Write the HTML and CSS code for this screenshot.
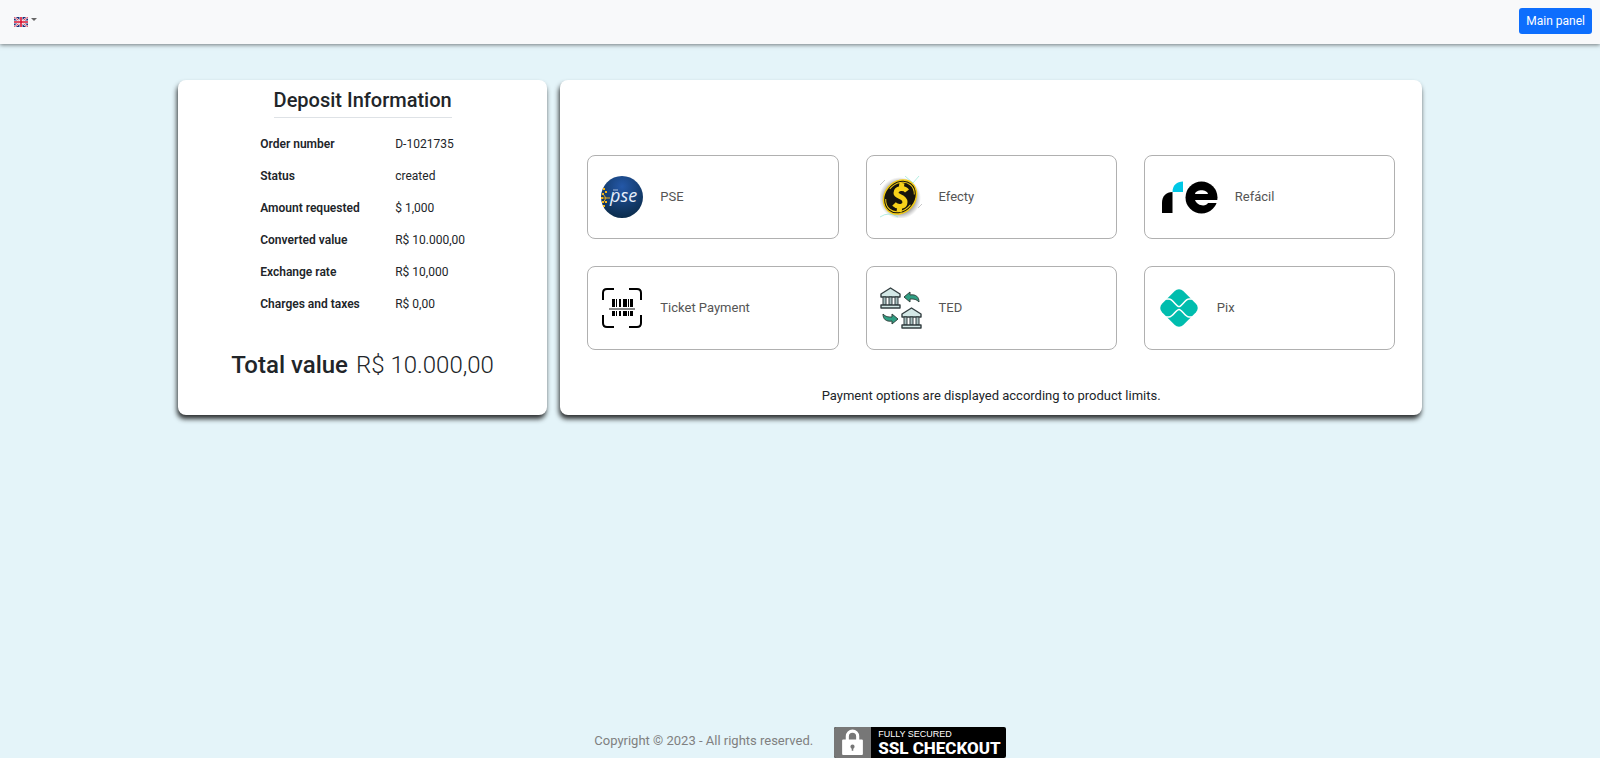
FILE: index.html
```html
<!DOCTYPE html>
<html lang="en">

<head>
    <meta charset="UTF-8">
    <meta name="viewport" content="width=device-width, initial-scale=1.0">
    <title>Deposit</title>
    <link rel="stylesheet" href="styles.css">
</head>

<body>

    <nav class="navbar">
        <button type="button" class="lang-toggle" aria-label="Language">
            <svg class="flag" viewBox="0 0 14 10">
                <rect width="14" height="10" fill="#1b2f78"/>
                <path d="M0 0L14 10M14 0L0 10" stroke="#fff" stroke-width="2"/>
                <path d="M0 0L14 10M14 0L0 10" stroke="#d8203c" stroke-width="0.8"/>
                <path d="M7 0V10M0 5H14" stroke="#fff" stroke-width="3"/>
                <path d="M7 0V10M0 5H14" stroke="#d8102f" stroke-width="1.6"/>
            </svg>
            <span class="caret"></span>
        </button>
        <a href="#" class="btn-main">Main panel</a>
    </nav>

    <main class="checkout">
        <section class="card deposit">
            <h1>Deposit Information</h1>
            <table class="details">
                <tr><th scope="row">Order number</th><td>D-1021735</td></tr>
                <tr><th scope="row">Status</th><td>created</td></tr>
                <tr><th scope="row">Amount requested</th><td>$ 1,000</td></tr>
                <tr><th scope="row">Converted value</th><td>R$ 10.000,00</td></tr>
                <tr><th scope="row">Exchange rate</th><td>R$ 10,000</td></tr>
                <tr><th scope="row">Charges and taxes</th><td>R$ 0,00</td></tr>
            </table>
            <p class="total"><strong>Total value</strong> <span>R$ 10.000,00</span></p>
        </section>

        <section class="card payment">
            <div class="options">
                <button type="button" class="option">
                    <svg class="icon" viewBox="0 0 42 42">
                        <defs>
                            <radialGradient id="pseBlue" cx="50%" cy="25%" r="75%">
                                <stop offset="0" stop-color="#2458a8"/>
                                <stop offset="1" stop-color="#0b2c4c"/>
                            </radialGradient>
                        </defs>
                        <circle cx="21" cy="21" r="21" fill="url(#pseBlue)"/>
                        <path d="M9 22H5L2 18M5 22L2 27M1 22H5" fill="none" stroke="#e2ab22"/>
                        <g fill="#f4b61c">
                            <rect x="2" y="12" width="2" height="2"/>
                            <rect x="4" y="15" width="2" height="2"/>
                            <rect x="1" y="17" width="2" height="2"/>
                            <rect x="0" y="21" width="2" height="2"/>
                            <rect x="1" y="25" width="2" height="2"/>
                            <rect x="4" y="25" width="2" height="2"/>
                            <rect x="2" y="29" width="2" height="2"/>
                        </g>
                        <text x="9" y="26" class="pse-text">pse</text>
                        <path d="M12 14H17" stroke="#a9bddb"/>
                    </svg>
                    <span>PSE</span>
                </button>

                <button type="button" class="option">
                    <svg class="icon" viewBox="0 0 42 42">
                        <defs>
                            <radialGradient id="coinGlow">
                                <stop offset="0.7" stop-color="#777" stop-opacity="0.75"/>
                                <stop offset="1" stop-color="#999" stop-opacity="0"/>
                            </radialGradient>
                        </defs>
                        <circle cx="20" cy="22" r="21" fill="url(#coinGlow)"/>
                        <path d="M25 0L33 7L39 0M0 41Q9 35 18 41" fill="none" stroke="#7fe3cf" stroke-width="0.6"/>
                        <path d="M0 9L5 4M38 32L42 28" stroke="#bbb" stroke-width="0.8"/>
                        <g transform="rotate(40 20 21)">
                            <ellipse cx="20" cy="21" rx="16" ry="19" fill="#f2cb16"/>
                            <ellipse cx="20" cy="21" rx="14.5" ry="17.5" fill="#16140d"/>
                            <ellipse cx="20" cy="21" rx="13" ry="16" fill="none" stroke="#f2cb16" stroke-dasharray="34 11"/>
                        </g>
                        <g fill="none" stroke="#f7d11a" stroke-width="5">
                            <path d="M27 15C24 11 16 12 16 17C16 21 25 20 25 26C25 31 18 32 14 28"/>
                            <path d="M22 7L21 13M20 30L19 36"/>
                        </g>
                    </svg>
                    <span>Efecty</span>
                </button>

                <button type="button" class="option">
                    <svg class="icon icon-wide" viewBox="0 0 60 42">
                        <path d="M4 37V27C4 20 8 16 14.5 16V37Z" fill="#000"/>
                        <path d="M14.5 16C14.5 9 19 5.5 25 5.5V16Z" fill="#00c8e6"/>
                        <circle cx="43.5" cy="21.5" r="16" fill="#000"/>
                        <path d="M37 18C38 13 49 13 50 18ZM37 24H60V27H50C48 31 39 30 37 24Z" fill="#fff"/>
                    </svg>
                    <span>Refácil</span>
                </button>

                <button type="button" class="option">
                    <svg class="icon" viewBox="0 0 42 42">
                        <path d="M2 13V6Q2 2 6 2H13M28 2H36Q40 2 40 6V13M40 28V36Q40 40 36 40H28M13 40H6Q2 40 2 36V28" fill="none" stroke="#000" stroke-width="2"/>
                        <path d="M11 12h3v17h-3zM15 12h1v17h-1zM18 12h2v17h-2zM22 12h4v17h-4zM27 12h1v17h-1zM29 12h3v17h-3z" fill="#000"/>
                        <path d="M8 20H34V24H8Z" fill="#fff"/>
                        <path d="M8 22H34" stroke="#888" stroke-width="2"/>
                    </svg>
                    <span>Ticket Payment</span>
                </button>

                <button type="button" class="option">
                    <svg class="icon" viewBox="0 0 42 42">
                        <defs>
                            <g id="bank" stroke="#333e40" stroke-linejoin="round">
                                <path d="M1 7L10.5 1L20 7V10H1Z" fill="#d3e8e6" stroke-width="1.4"/>
                                <path d="M3 10H6V18H3ZM9 10H12V18H9ZM15 10H18V18H15Z" fill="#a8bfbf"/>
                                <path d="M1 18H20V21H1Z" fill="#d3e8e6" stroke-width="1.4"/>
                            </g>
                        </defs>
                        <use href="#bank"/>
                        <use href="#bank" x="21" y="20"/>
                        <path id="swap" d="M24 10L30 5V8C36 7 39 10 39 15C36 12 34 12 30 12V15Z" fill="#2f9f83" stroke="#33433f" stroke-linejoin="round"/>
                        <use href="#swap" transform="rotate(180 21 21)"/>
                    </svg>
                    <span>TED</span>
                </button>

                <button type="button" class="option">
                    <svg class="icon" viewBox="0 0 42 42">
                        <rect x="6" y="6" width="30" height="30" rx="6" fill="#00bdae" transform="rotate(45 21 21)"/>
                        <path d="M6 12H11C15 12 18 19.5 21 19.5S27 12 31 12H36M6 30H11C15 30 18 22.5 21 22.5S27 30 31 30H36" fill="none" stroke="#fff" stroke-width="1.5"/>
                    </svg>
                    <span>Pix</span>
                </button>
            </div>
            <p class="note">Payment options are displayed according to product limits.</p>
        </section>
    </main>

    <footer class="footer">
        <span class="copyright">Copyright © 2023 - All rights reserved.</span>
        <div class="ssl">
            <div class="ssl-lock">
                <svg viewBox="0 0 20 26">
                    <path d="M5 12V7a5 5 0 0 1 10 0V12" fill="none" stroke="#fff" stroke-width="3"/>
                    <rect x="0" y="10" width="20" height="15" rx="1" fill="#fff"/>
                    <circle cx="10" cy="17" r="2" fill="#777"/>
                    <path d="M10 17V21" stroke="#777" stroke-width="1.5"/>
                </svg>
            </div>
            <div class="ssl-text">
                <span>FULLY SECURED</span>
                <strong>SSL CHECKOUT</strong>
            </div>
        </div>
    </footer>

</body>

</html>
```

FILE: styles.css
```css
* {
    box-sizing: border-box;
}

body {
    display: flex;
    flex-direction: column;
    min-height: 100vh;
    margin: 0;
    background-color: #e4f4f9;
    color: #212529;
    font-family: Roboto, sans-serif;
    font-size: 13px;
    line-height: 20px;
}

button {
    font-family: inherit;
    cursor: pointer;
}

.navbar {
    display: flex;
    justify-content: space-between;
    align-items: center;
    height: 44px;
    padding: 0 8px 2px 14px;
    background-color: #f8f9fa;
    box-shadow: 0 1px 4px rgba(0, 0, 0, 0.5);
}

.lang-toggle {
    display: flex;
    gap: 3px;
    padding: 2px 0 0;
    border: none;
    background: none;
}

.flag {
    width: 14px;
    height: 10px;
}

.caret {
    margin-top: 1px;
    border-top: 3px solid #666;
    border-left: 3px solid transparent;
    border-right: 3px solid transparent;
    align-self: flex-start;
}

.btn-main {
    padding: 3px 7px;
    border-radius: 3px;
    background-color: #0d6efd;
    color: white;
    font-size: 12px;
    text-decoration: none;
}

.checkout {
    display: grid;
    grid-template-columns: 3fr 7fr;
    gap: 13px;
    width: calc(78% - 4px);
    margin: 36px auto;
}

.card {
    display: flex;
    flex-direction: column;
    align-items: center;
    border-radius: 8px;
    background-color: white;
    box-shadow: -1px 4px 5px rgba(0, 0, 0, 0.8);
}

h1 {
    margin: 6px 0 10px;
    padding: 0 0 3px;
    border-bottom: 1px solid #dee2e6;
    font-size: 20px;
    font-weight: 500;
    line-height: 28px;
}

.details {
    border-collapse: collapse;
    font-size: 12px;
}

.details th,
.details td {
    height: 32px;
    padding: 0;
    text-align: left;
}

.details th {
    width: 135px;
    font-weight: 600;
}

.total {
    display: flex;
    gap: 8px;
    margin: 29px 0 33px;
    font-size: 24px;
    line-height: 32px;
}

.total strong {
    font-weight: 500;
}

.total span {
    font-weight: 300;
}

.payment {
    padding: 75px 27px 9px;
}

.options {
    display: grid;
    grid-template-columns: repeat(3, 1fr);
    gap: 27px;
    width: 100%;
}

.option {
    display: flex;
    align-items: center;
    gap: 17px;
    height: 84px;
    padding: 0 13px 1px;
    border: 1px solid #b0b0b0;
    border-radius: 8px;
    background-color: white;
    color: #555;
    font-size: 13px;
}

.icon {
    width: 42px;
    height: 42px;
}

.icon-wide {
    width: 60px;
}

.pse-text {
    fill: #e6eefa;
    font-family: "Open Sans", sans-serif;
    font-size: 18px;
    font-style: italic;
}

.note {
    margin: 36px 0 0;
}

.footer {
    display: flex;
    justify-content: center;
    align-items: center;
    gap: 21px;
    margin-top: auto;
    color: #808080;
}

.copyright {
    padding-bottom: 4px;
}

.ssl {
    display: flex;
    overflow: hidden;
    border-radius: 2px;
    background-color: black;
}

.ssl-lock {
    padding: 2px 8px;
    background-color: #777;
}

.ssl-lock svg {
    display: block;
    width: 21px;
    height: 27px;
}

.ssl-text {
    display: flex;
    flex-direction: column;
    justify-content: center;
    padding: 0 5px 0 7px;
    color: white;
}

.ssl-text span {
    font-family: "Liberation Sans", sans-serif;
    font-size: 9px;
    line-height: 11px;
}

.ssl-text strong {
    font-size: 17px;
    font-weight: 800;
    line-height: 16px;
}
```
